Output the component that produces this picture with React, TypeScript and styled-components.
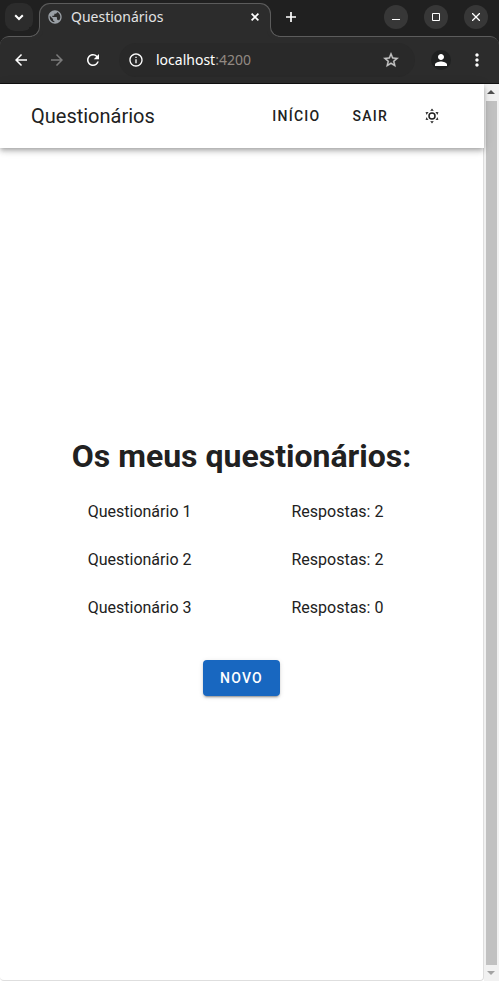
import React from "react";
import styled, { createGlobalStyle } from "styled-components";
import {
  MdArrowBack,
  MdArrowForward,
  MdInfoOutline,
  MdMoreVert,
  MdPerson,
  MdPublic,
  MdRefresh,
  MdStarOutline,
} from "react-icons/md";

const color = {
  strip: "#202020",
  bar: "#2c2c2c",
  pill: "#292929",
  line: "#5c5c5c",
  text: "#212121",
  primary: "#1867c0",
};

const GlobalStyle = createGlobalStyle`
  *, *::before, *::after { box-sizing: border-box; }
  body { margin: 0; background: #fff; }
  button, input { font: inherit; color: inherit; border: 0; padding: 0; background: none; }
  button { cursor: pointer; }
  svg { display: block; flex: none; }
`;

const Window = styled.div`
  display: flex;
  flex-direction: column;
  min-height: 100vh;
  background: #fff;
  color: ${color.text};
  font-family: Roboto, sans-serif;
`;

const Chrome = styled.header`
  background: ${color.strip};
  color: #fff;
  font-family: "Noto Sans", sans-serif;
  font-size: 14px;
  border-bottom: 1px solid #121212;
`;

const TabStrip = styled.div`
  display: flex;
  align-items: flex-start;
  padding: 3px 11px 0 5px;
  margin-bottom: -1px;
`;

const TabSearch = styled.button`
  && {
    display: grid;
    place-items: center;
    width: 28px;
    height: 28px;
    margin-right: 6px;
    border-radius: 10px;
    background: ${color.bar};
  }
`;

const Tab = styled.div`
  position: relative;
  z-index: 1;
  display: flex;
  flex: 0 1 232px;
  min-width: 0;
  height: 34px;
  padding: 0 9px 0 8px;
  border-radius: 11px 11px 0 0;
  background: ${color.bar};

  &::before {
    content: "";
    position: absolute;
    inset: 0 0 10px;
    border: 1px solid ${color.line};
    border-bottom: 0;
    border-radius: 11px 11px 0 0;
  }
`;

const TabFlare = styled.span<{ $side: "left" | "right" }>`
  position: absolute;
  bottom: 0;
  ${(p) => p.$side}: -10px;
  width: 11px;
  height: 10px;
  background: ${color.strip};
  border-bottom: 1px solid ${color.line};
  border-${(p) => (p.$side === "left" ? "right" : "left")}: 1px solid ${color.line};
  border-radius: ${(p) => (p.$side === "left" ? "0 0 10px 0" : "0 0 0 10px")};
  box-shadow: ${(p) => (p.$side === "left" ? "3px" : "-3px")} 3px 0 ${color.bar};
`;

const TabContent = styled.div`
  position: relative;
  z-index: 1;
  display: flex;
  flex: 1;
  align-items: center;
  gap: 8px;
  min-width: 0;
  height: 28px;
`;

const TabTitle = styled.span`
  flex: 1;
  overflow: hidden;
  padding-bottom: 2px;
  white-space: nowrap;
  color: #e3e3e3;
`;

const IconButton = styled.button<{ $size: number; $tone?: string; $fill?: string }>`
  display: grid;
  place-items: center;
  flex: none;
  width: ${(p) => p.$size}px;
  height: ${(p) => p.$size}px;
  border-radius: 50%;
  color: ${(p) => p.$tone ?? "inherit"};
  background: ${(p) => p.$fill ?? "none"};
`;

const NewTab = styled(IconButton)`
  margin-left: 6px;
`;

const WindowControls = styled.div`
  display: flex;
  gap: 16px;
  margin-left: auto;
  padding-top: 2px;
`;

const Toolbar = styled.div`
  display: flex;
  align-items: center;
  height: 47px;
  padding: 0 8px;
  border-top: 1px solid ${color.line};
  border-radius: 9px 9px 0 0;
  background: ${color.bar};
`;

const HistoryControls = styled.div`
  display: flex;
  gap: 10px;
  margin-right: 13px;
`;

const AddressBar = styled.form`
  display: flex;
  flex: 1;
  align-items: center;
  gap: 10px;
  min-width: 0;
  height: 34px;
  margin-right: 16px;
  padding: 0 11px 0 7px;
  border-radius: 17px;
  background: ${color.pill};
`;

const Address = styled.a`
  flex: 1;
  overflow: hidden;
  padding-bottom: 2px;
  color: #fff;
  text-decoration: none;
`;

const Port = styled.span`
  color: #928983;
`;

const Menus = styled.div`
  display: flex;
  align-items: center;
  gap: 12px;
`;

const Viewport = styled.div`
  display: flex;
  flex: 1;
`;

const Page = styled.div`
  display: flex;
  flex: 1;
  flex-direction: column;
  min-width: 0;
  border: solid #dedede;
  border-width: 0 1px 1px 0;
  border-radius: 0 0 4px 4px;
`;

const AppBar = styled.div`
  position: relative;
  display: flex;
  align-items: center;
  justify-content: space-between;
  height: 64px;
  margin-right: -1px;
  padding: 0 32px 0 31px;
  background: #fff;
  box-shadow:
    0 2px 4px -1px rgba(0, 0, 0, 0.2),
    0 4px 5px rgba(0, 0, 0, 0.14),
    0 1px 10px rgba(0, 0, 0, 0.12);
`;

const AppTitle = styled.div`
  font-size: 20px;
  line-height: 30px;
`;

const Nav = styled.nav`
  display: flex;
  align-items: center;
`;

const NavLink = styled.a`
  padding: 0 16px;
  color: inherit;
  font-size: 14px;
  font-weight: 500;
  line-height: 36px;
  letter-spacing: 0.09em;
  text-decoration: none;
  text-transform: uppercase;
`;

const ThemeButton = styled(IconButton)`
  margin-left: 8px;
`;

const Main = styled.main`
  display: flex;
  flex: 1;
  align-items: center;
  justify-content: center;
`;

const Content = styled.section`
  display: flex;
  flex-direction: column;
  align-items: center;
`;

const Heading = styled.h1`
  margin: 0 0 8px;
  font-size: 32px;
  font-weight: 700;
  line-height: 48px;
`;

const List = styled.ul`
  align-self: stretch;
  margin: 0 0 28px;
  padding: 0;
  list-style: none;
`;

const Row = styled.li`
  display: grid;
  grid-template-columns: 3fr 2fr;
  font-size: 16px;
  line-height: 48px;
`;

const Cell = styled.span`
  padding-left: 16px;
`;

const NewButton = styled.button`
  && {
    height: 36px;
    padding: 0 17px;
    border-radius: 4px;
    background: ${color.primary};
    color: #fff;
    font-size: 14px;
    font-weight: 500;
    letter-spacing: 0.09em;
    box-shadow:
      0 3px 1px -2px rgba(0, 0, 0, 0.2),
      0 2px 2px rgba(0, 0, 0, 0.14),
      0 1px 5px rgba(0, 0, 0, 0.12);
  }
`;

const Scrollbar = styled.div`
  display: flex;
  flex-direction: column;
  align-items: center;
  width: 15px;
  padding-right: 1px;
  background: #f1f1f1;
`;

const ScrollArrow = styled.div<{ $tone: string }>`
  display: grid;
  place-items: center;
  width: 14px;
  height: 16px;
  color: ${(p) => p.$tone};
`;

const ScrollThumb = styled.div`
  flex: 1;
  width: 11px;
  margin-top: 1px;
  background: #c1c1c1;
`;

const questionnaires = [
  { name: "Questionário 1", answers: 2 },
  { name: "Questionário 2", answers: 2 },
  { name: "Questionário 3", answers: 0 },
];

const SunIcon = () => (
  <svg width="18" height="18" viewBox="0 0 24 24" fill="currentColor" aria-hidden="true">
    <path d="M12,7A5,5 0 0,1 17,12A5,5 0 0,1 12,17A5,5 0 0,1 7,12A5,5 0 0,1 12,7M12,9A3,3 0 0,0 9,12A3,3 0 0,0 12,15A3,3 0 0,0 15,12A3,3 0 0,0 12,9M12,2L14.39,5.42C13.65,5.15 12.84,5 12,5C11.16,5 10.35,5.15 9.61,5.42L12,2M3.34,7L7.5,6.65C6.9,7.16 6.36,7.78 5.94,8.5C5.5,9.24 5.25,10 5.11,10.79L3.34,7M3.36,17L5.12,13.23C5.26,14 5.53,14.78 5.95,15.5C6.37,16.24 6.91,16.86 7.5,17.37L3.36,17M20.65,7L18.88,10.79C18.74,10 18.47,9.23 18.05,8.5C17.63,7.78 17.1,7.15 16.5,6.64L20.65,7M20.64,17L16.5,17.36C17.09,16.85 17.62,16.22 18.04,15.5C18.46,14.77 18.73,14 18.87,13.21L20.64,17M12,22L9.59,18.56C10.33,18.83 11.14,19 12,19C12.82,19 13.63,18.83 14.37,18.56L12,22Z" />
  </svg>
);

const LineGlyph = ({ size, weight, d }: { size: number; weight: number; d: string }) => (
  <svg
    width={size}
    height={size}
    viewBox={`0 0 ${size} ${size}`}
    fill="none"
    stroke="currentColor"
    strokeWidth={weight}
    aria-hidden="true"
  >
    <path d={d} />
  </svg>
);

const ArrowGlyph = ({ d }: { d: string }) => (
  <svg width="8" height="4" viewBox="0 0 8 4" fill="currentColor" aria-hidden="true">
    <path d={d} />
  </svg>
);

export default function App() {
  return (
    <Window>
      <GlobalStyle />
      <Chrome>
        <TabStrip>
          <TabSearch aria-label="Pesquisar separadores">
            <LineGlyph size={10} weight={2} d="M1.2 3.2L5 7l3.800-3.800" />
          </TabSearch>
          <Tab>
            <TabFlare $side="left" />
            <TabFlare $side="right" />
            <TabContent>
              <MdPublic size={16} color="#9aa0a6" />
              <TabTitle>Questionários</TabTitle>
              <IconButton $size={14} aria-label="Fechar separador">
                <LineGlyph size={8} weight={1.7} d="M.6.6l6.800 6.800M7.400.6L.6 7.400" />
              </IconButton>
            </TabContent>
          </Tab>
          <NewTab $size={28} aria-label="Novo separador">
            <LineGlyph size={10} weight={1.7} d="M0 5h10M5 0v10" />
          </NewTab>
          <WindowControls>
            <IconButton $size={24} $fill="#373737" aria-label="Minimizar">
              <LineGlyph size={8} weight={1} d="M0 6.5h8" />
            </IconButton>
            <IconButton $size={24} $fill="#373737" aria-label="Maximizar">
              <LineGlyph size={8} weight={1} d="M.5.5h7v7h-7z" />
            </IconButton>
            <IconButton $size={24} $fill="#373737" aria-label="Fechar">
              <LineGlyph size={8} weight={1.3} d="M0 0l8 8M8 0L0 8" />
            </IconButton>
          </WindowControls>
        </TabStrip>
        <Toolbar>
          <HistoryControls>
            <IconButton $size={26} aria-label="Retroceder">
              <MdArrowBack size={18} />
            </IconButton>
            <IconButton $size={26} $tone="#7b7b7b" aria-label="Avançar">
              <MdArrowForward size={18} />
            </IconButton>
            <IconButton $size={26} aria-label="Recarregar">
              <MdRefresh size={18} />
            </IconButton>
          </HistoryControls>
          <AddressBar>
            <IconButton $size={20} type="button" aria-label="Informações do site">
              <MdInfoOutline size={16} />
            </IconButton>
            <Address href="http://localhost:4200">
              localhost<Port>:4200</Port>
            </Address>
            <IconButton $size={26} $tone="#c7c7c7" type="button" aria-label="Adicionar aos marcadores">
              <MdStarOutline size={18} stroke="currentColor" strokeWidth={0.5} />
            </IconButton>
          </AddressBar>
          <Menus>
            <IconButton $size={20} $fill="#1f2020" aria-label="Perfil">
              <MdPerson size={18} />
            </IconButton>
            <IconButton $size={28} aria-label="Menu">
              <MdMoreVert size={20} />
            </IconButton>
          </Menus>
        </Toolbar>
      </Chrome>
      <Viewport>
        <Page>
          <AppBar>
            <AppTitle>Questionários</AppTitle>
            <Nav>
              <NavLink href="#inicio">Início</NavLink>
              <NavLink href="#sair">Sair</NavLink>
              <ThemeButton $size={40} aria-label="Mudar tema">
                <SunIcon />
              </ThemeButton>
            </Nav>
          </AppBar>
          <Main>
            <Content>
              <Heading>Os meus questionários:</Heading>
              <List>
                {questionnaires.map((item) => (
                  <Row key={item.name}>
                    <Cell>{item.name}</Cell>
                    <Cell>Respostas: {item.answers}</Cell>
                  </Row>
                ))}
              </List>
              <NewButton>NOVO</NewButton>
            </Content>
          </Main>
        </Page>
        <Scrollbar aria-hidden="true">
          <ScrollArrow $tone="#505050">
            <ArrowGlyph d="M4 0l4 4H0z" />
          </ScrollArrow>
          <ScrollThumb />
          <ScrollArrow $tone="#a3a3a3">
            <ArrowGlyph d="M0 0h8L4 4z" />
          </ScrollArrow>
        </Scrollbar>
      </Viewport>
    </Window>
  );
}
